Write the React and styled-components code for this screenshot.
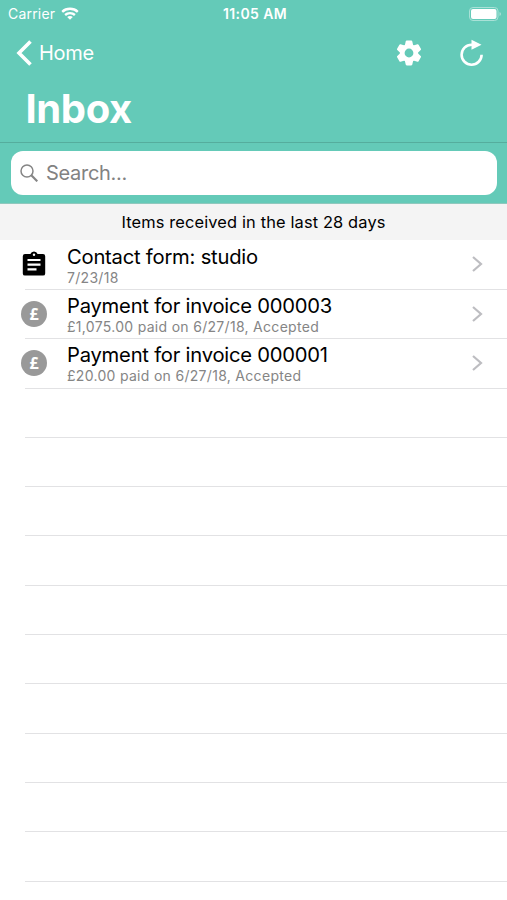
import React from 'react';
import styled, { createGlobalStyle } from 'styled-components';

const teal = '#64cab8';
const rowHeight = 49.3;

const GlobalStyle = createGlobalStyle`
    body {
        margin: 0;
        background: #fff;
        font-family: Inter, "Liberation Sans", sans-serif;
    }
`;

const Screen = styled.div`
    width: 507px;
    height: 900px;
    overflow: hidden;
    background: #fff;
    color: #000;
`;

const Header = styled.header`
    box-sizing: border-box;
    height: 143px;
    background: ${teal};
    border-bottom: 1px solid #55ad9d;
    color: #fff;
`;

const StatusBar = styled.div`
    display: grid;
    grid-template-columns: 1fr auto 1fr;
    align-items: center;
    height: 27px;
    padding: 0 5px 0 8px;
`;

const Carrier = styled.div`
    display: flex;
    align-items: center;
    gap: 6px;
`;

const Battery = styled.svg`
    justify-self: end;
`;

const NavBar = styled.nav`
    display: flex;
    align-items: center;
    height: 51px;
    padding: 0 22px 0 16px;
`;

const BackButton = styled.a`
    display: flex;
    align-items: center;
    gap: 7px;
    margin-right: auto;
`;

const Action = styled.svg`
    display: block;
    margin-left: ${props => props.$gap || 0}px;
`;

const Text = styled.span`
    font-size: ${props => props.$size}px;
    font-weight: ${props => props.$weight || 400};
    letter-spacing: ${props => props.$spacing || 0}px;
    color: ${props => props.$color || 'inherit'};
    line-height: ${props => props.$line || 20}px;
    white-space: nowrap;
`;

const Title = styled.h1`
    margin: 0;
    padding: 8px 0 0 25.5px;
    font-size: 40px;
    font-weight: 700;
    letter-spacing: -0.4px;
    line-height: 46px;
`;

const SearchBar = styled.div`
    box-sizing: border-box;
    height: 61px;
    padding: 8px 10px 0 11px;
    background: ${teal};
    border-bottom: 1px solid #8fc8bd;
`;

const SearchField = styled.div`
    display: flex;
    align-items: center;
    gap: 8px;
    height: 44px;
    padding-left: 9px;
    border-radius: 12px;
    background: #fff;
`;

const SectionHeader = styled.div`
    display: flex;
    align-items: center;
    justify-content: center;
    height: 36px;
    background: #f4f4f4;
`;

const List = styled.div`
    padding-top: 0.7px;
`;

const Line = styled.div`
    box-sizing: border-box;
    height: ${rowHeight}px;
    margin-left: 25px;
    border-bottom: 1px solid #e2e2e4;
`;

const RowLine = styled(Line)`
    display: flex;
`;

const IconSlot = styled.div`
    display: flex;
    flex: none;
    align-items: center;
    width: 42px;

    svg {
        flex: none;
        margin: 0 0 2px -4px;
    }
`;

const Labels = styled.div`
    display: flex;
    flex: 1;
    flex-direction: column;
    padding-top: 4px;
`;

const Chevron = styled.svg`
    align-self: center;
    margin: 0 24px 1px 0;
`;

const WifiIcon = () => (
    <svg width="18" height="13" viewBox="0 0 18 13" fill="none" stroke="#fff" strokeWidth="2.4">
        <path d="M1.2 4.8C5.5.8 12.5.8 16.8 4.8" />
        <path d="M4.1 8C6.8 5.5 11.2 5.5 13.9 8" />
        <path d="M6.2 10C7.8 8.7 10.2 8.7 11.8 10L9 12.8z" fill="#fff" stroke="none" />
    </svg>
);

const GearIcon = () => (
    <Action width="30" height="30" viewBox="-15 -15 30 30">
        <circle r="6.8" fill="none" stroke="#fff" strokeWidth="4.8" />
        {[0, 60, 120, 180, 240, 300].map(angle => (
            <path
                key={angle}
                d="M-4.2-7.500L-3.300-11.600Q-3.100-12.400-2.300-12.400H2.300Q3.100-12.400 3.300-11.600L4.200-7.500z"
                fill="#fff"
                transform={`rotate(${angle})`}
            />
        ))}
    </Action>
);

const RefreshIcon = () => (
    <Action $gap={35} width="26" height="28" viewBox="0 0 26 28">
        <path d="M13.500 5.700H12.600A10 10 0 1 0 22.600 15.700" fill="none" stroke="#fff" strokeWidth="2.600" />
        <path d="M12.500.7v10L22.500 5.700z" fill="#fff" />
    </Action>
);

const ClipboardIcon = () => (
    <svg width="26" height="26" viewBox="0 0 26 26">
        <path
            d="M4 3h5.4a3.8 3.8 0 0 1 7.2 0H22a2.2 2.2 0 0 1 2.2 2.2v17.2A2.2 2.2 0 0 1 22 24.6H4a2.2 2.2 0 0 1-2.2-2.2V5.2A2.2 2.2 0 0 1 4 3z"
            fill="#000"
        />
        <circle cx="13" cy="3.7" r="1.2" fill="#fff" />
        <path d="M6.5 9h13M6.5 13.6h13M6.5 18.4h9" stroke="#fff" strokeWidth="2.1" />
    </svg>
);

const Coin = styled.div`
    flex: none;
    width: 26px;
    height: 26px;
    margin-left: -4px;
    border-radius: 50%;
    background: #999;
    color: #fff;
    font-family: "Noto Sans", sans-serif;
    font-size: 16px;
    font-weight: 700;
    line-height: 26px;
    text-align: center;
`;

const items = [
    { title: 'Contact form: studio', detail: '7/23/18', icon: 'form' },
    { title: 'Payment for invoice 000003', detail: '£1,075.00 paid on 6/27/18, Accepted', icon: 'payment' },
    { title: 'Payment for invoice 000001', detail: '£20.00 paid on 6/27/18, Accepted', icon: 'payment' }
];

const InboxItem = ({ title, detail, icon }) => (
    <RowLine>
        <IconSlot>
            {(icon === 'form') && <ClipboardIcon />}
            {(icon === 'payment') && <Coin>£</Coin>}
        </IconSlot>
        <Labels>
            <Text $size={20.2} $spacing={-0.22} $line={24}>{title}</Text>
            <Text $size={14} $spacing={0.3} $line={17} $color="#858585">{detail}</Text>
        </Labels>
        <Chevron width="12" height="16" viewBox="0 0 12 16" fill="none" stroke="#bdbdc1" strokeWidth="2.2">
            <path d="M2 1l8 7-8 7" />
        </Chevron>
    </RowLine>
);

const App = () => (
    <Screen>
        <GlobalStyle />
        <Header>
            <StatusBar>
                <Carrier>
                    <Text $size={14} $spacing={0.2}>Carrier</Text>
                    <WifiIcon />
                </Carrier>
                <Text $size={14} $weight={600} $spacing={0.4}>11:05 AM</Text>
                <Battery width="33" height="14" viewBox="0 0 33 14">
                    <rect x="0.5" y="0.5" width="28.5" height="13" rx="3.5" fill="none" stroke="#a9e1d7" />
                    <rect x="2" y="2" width="25.5" height="10" rx="2" fill="#fff" />
                    <path d="M30.5 5v4q1.5-.6 1.5-2t-1.5-2z" fill="#a9e1d7" />
                </Battery>
            </StatusBar>
            <NavBar>
                <BackButton>
                    <svg width="16" height="26" viewBox="0 0 16 26" fill="none" stroke="#fff" strokeWidth="3.6">
                        <path d="M14.5 1.5L3 13l11.5 11.5" />
                    </svg>
                    <Text $size={20} $spacing={-0.3} $line={24}>Home</Text>
                </BackButton>
                <GearIcon />
                <RefreshIcon />
            </NavBar>
            <Title>Inbox</Title>
        </Header>
        <SearchBar>
            <SearchField>
                <svg width="18" height="18" viewBox="0 0 18 18" fill="none" stroke="#858585">
                    <circle cx="7" cy="7" r="6" strokeWidth="1.5" />
                    <path d="M11.3 11.3l6 6" strokeWidth="2.2" />
                </svg>
                <Text $size={20} $spacing={-0.3} $line={24} $color="#828282">Search...</Text>
            </SearchField>
        </SearchBar>
        <SectionHeader>
            <Text $size={16.4} $spacing={0.14}>Items received in the last 28 days</Text>
        </SectionHeader>
        <List>
            {items.map(item => <InboxItem key={item.title} {...item} />)}
            {Array.from({ length: 10 }, (_, i) => <Line key={i} />)}
        </List>
    </Screen>
);

export default App;
